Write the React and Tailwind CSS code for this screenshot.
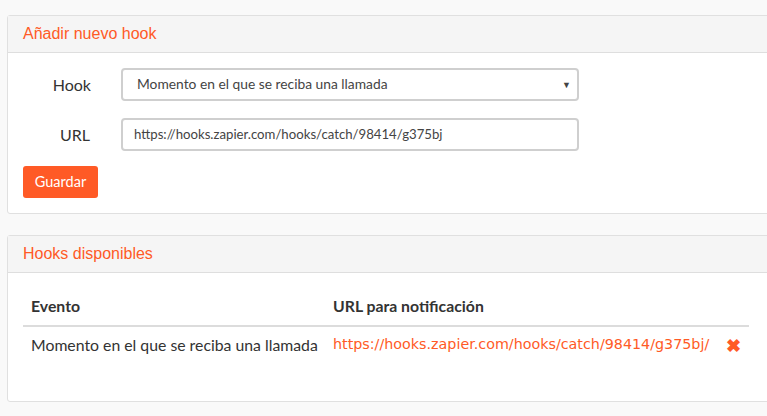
const ORANGE = 'text-[#ff5a26]';

function Panel({ title, children, className = '' }) {
  return (
    <div className={`bg-white border border-[#e0e0e0] rounded-[3px] ${className}`}>
      <div className="h-[37px] bg-[#f5f5f5] border-b border-[#dedede] px-[15px] flex items-center">
        <h3 className={`${ORANGE} text-[16px] font-['Liberation_Sans',Arial,sans-serif]`}>{title}</h3>
      </div>
      {children}
    </div>
  );
}

export default function App() {
  return (
    <div className="min-h-[416px] bg-[#f9f9f9] pt-[15px] pl-[7px] font-['Lato',sans-serif] text-[#333]">
      <div className="-mr-[4px]">
        <Panel title="Añadir nuevo hook" className="h-[199px]">
          <div className="pt-[15px] px-[15px]">
            <div className="flex items-center">
              <label className="w-[68px] text-right text-[16px]">Hook</label>
              <div className="ml-[30px] w-[458px] h-[33px] border-2 border-[#cfcfcf] rounded-[4px] flex items-center justify-between pl-[14px] pr-[6px] text-[13.8px] text-[#444]">
                <span>Momento en el que se reciba una llamada</span>
                <span className="text-[9px] text-[#444]">▼</span>
              </div>
            </div>
            <div className="flex items-center mt-[17px]">
              <label className="w-[67px] text-right text-[16px]">URL</label>
              <div className="ml-[31px] w-[458px] h-[33px] border-2 border-[#cfcfcf] rounded-[4px] flex items-center pl-[11px] text-[13.2px] text-[#444]">
                https://hooks.zapier.com/hooks/catch/98414/g375bj
              </div>
            </div>
            <button className="mt-[15px] h-[32px] w-[75px] bg-[#ff5a26] text-white rounded-[3px] text-[14.5px]">
              Guardar
            </button>
          </div>
        </Panel>

        <Panel title="Hooks disponibles" className="mt-[21px] h-[167px]">
          <div className="px-[15px] pt-[14px]">
            <div className="flex items-center h-[40px] border-b-2 border-[#dcdcdc] w-[726px] text-[15.8px] font-bold">
              <div className="w-[310px] pl-[8px]">Evento</div>
              <div>URL para notificación</div>
            </div>
            <div className="flex items-center h-[36px] w-[726px] text-[15.8px]">
              <div className="w-[310px] pl-[8px] text-[#333]">Momento en el que se reciba una llamada</div>
              <div className={`${ORANGE} text-[14.3px] font-['DejaVu_Sans',Verdana,sans-serif]`}>
                https://hooks.zapier.com/hooks/catch/98414/g375bj/
              </div>
              <span className={`${ORANGE} ml-auto mr-[8px] text-[18px] font-bold leading-none`}>✖</span>
            </div>
          </div>
        </Panel>
      </div>
    </div>
  );
}
